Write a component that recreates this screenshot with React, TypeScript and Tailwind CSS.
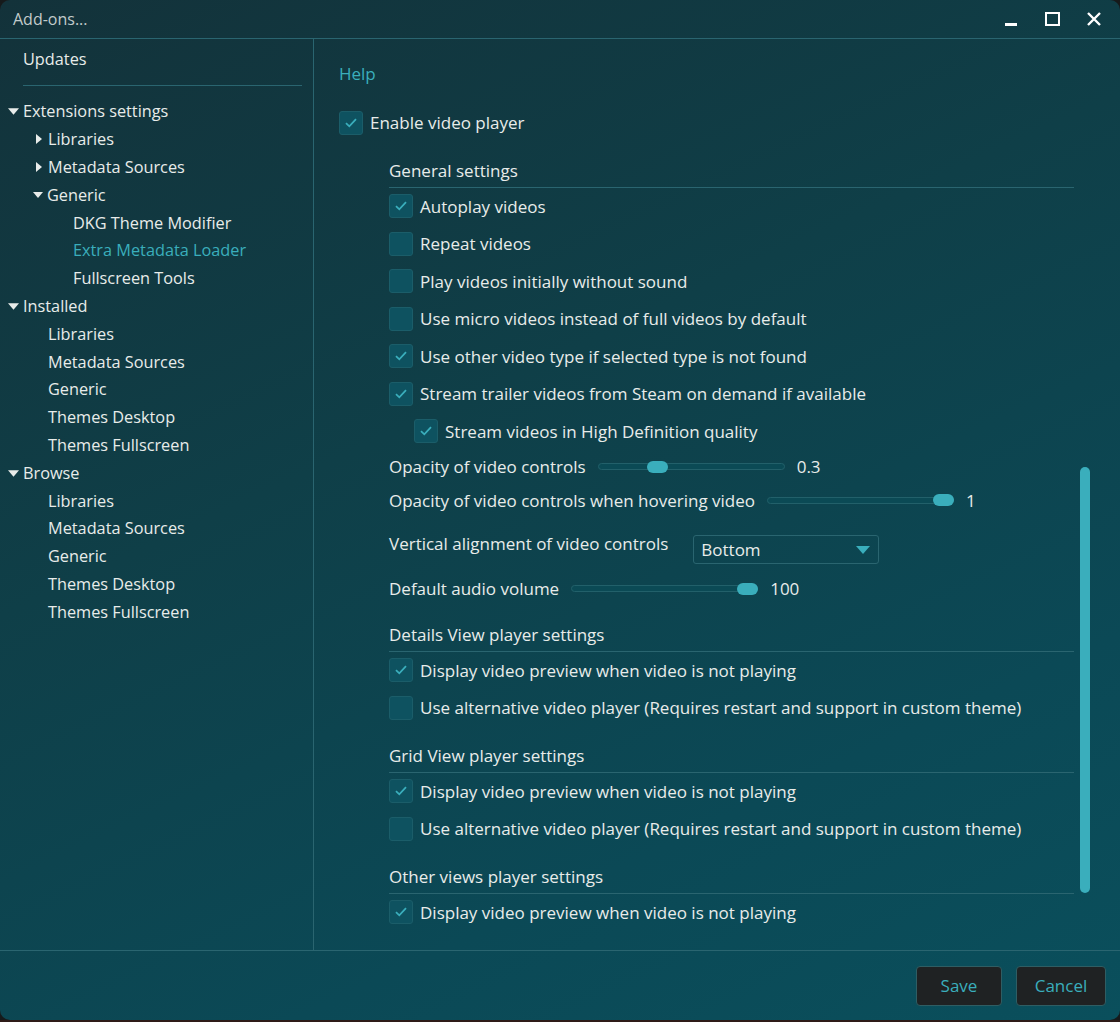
import React from "react";

const FONT = { fontFamily: "'Open Sans', Lato, sans-serif" };

type TreeRow = {
  label: string;
  kind: "down0" | "right1" | "down1" | "plain1" | "plain2";
  active?: boolean;
};

const TREE: TreeRow[] = [
  { label: "Extensions settings", kind: "down0" },
  { label: "Libraries", kind: "right1" },
  { label: "Metadata Sources", kind: "right1" },
  { label: "Generic", kind: "down1" },
  { label: "DKG Theme Modifier", kind: "plain2" },
  { label: "Extra Metadata Loader", kind: "plain2", active: true },
  { label: "Fullscreen Tools", kind: "plain2" },
  { label: "Installed", kind: "down0" },
  { label: "Libraries", kind: "plain1" },
  { label: "Metadata Sources", kind: "plain1" },
  { label: "Generic", kind: "plain1" },
  { label: "Themes Desktop", kind: "plain1" },
  { label: "Themes Fullscreen", kind: "plain1" },
  { label: "Browse", kind: "down0" },
  { label: "Libraries", kind: "plain1" },
  { label: "Metadata Sources", kind: "plain1" },
  { label: "Generic", kind: "plain1" },
  { label: "Themes Desktop", kind: "plain1" },
  { label: "Themes Fullscreen", kind: "plain1" },
];

function DownArrow({ className }: { className: string }) {
  return (
    <svg className={className} viewBox="0 0 10 6" fill="#e8ecea">
      <path d="M0 0 L10 0 L5 6 Z" />
    </svg>
  );
}

function RightArrow({ className }: { className: string }) {
  return (
    <svg className={className} viewBox="0 0 6 10" fill="#e8ecea">
      <path d="M0 0 L6 5 L0 10 Z" />
    </svg>
  );
}

function TreeItem({ row }: { row: TreeRow }) {
  const color = row.active ? "text-[#3aaebc]" : "text-[#e8ecea]";
  if (row.kind === "down0") {
    return (
      <div className="flex h-[27.8px] items-center pl-[8px]">
        <DownArrow className="mr-[4px] h-[7px] w-[11px]" />
        <span className={color}>{row.label}</span>
      </div>
    );
  }
  if (row.kind === "right1") {
    return (
      <div className="flex h-[27.8px] items-center pl-[36px]">
        <RightArrow className="mr-[6px] h-[10px] w-[6px]" />
        <span className={color}>{row.label}</span>
      </div>
    );
  }
  if (row.kind === "down1") {
    return (
      <div className="flex h-[27.8px] items-center pl-[33px]">
        <DownArrow className="mr-[4px] h-[6px] w-[10px]" />
        <span className={color}>{row.label}</span>
      </div>
    );
  }
  if (row.kind === "plain1") {
    return (
      <div className="flex h-[27.8px] items-center pl-[48px]">
        <span className={color}>{row.label}</span>
      </div>
    );
  }
  return (
    <div className="flex h-[27.8px] items-center pl-[73px]">
      <span className={color}>{row.label}</span>
    </div>
  );
}

function CheckBox({ checked }: { checked: boolean }) {
  return (
    <div className="flex h-[24px] w-[24px] shrink-0 items-center justify-center rounded-[3px] border border-[#1b5d69] bg-[#0e5260]">
      {checked && (
        <svg viewBox="0 0 12 10" className="h-[10px] w-[12px]" fill="none">
          <path d="M1 5.2 L4.3 8.3 L11 1.2" stroke="#3aaebc" strokeWidth="1.8" />
        </svg>
      )}
    </div>
  );
}

function CheckRow({ label, checked, indent }: { label: string; checked: boolean; indent?: boolean }) {
  return (
    <div className={indent ? "flex h-[37.5px] items-center gap-[7px] pl-[25px]" : "flex h-[37.5px] items-center gap-[7px]"}>
      <CheckBox checked={checked} />
      <span className="text-[#e8ecea]">{label}</span>
    </div>
  );
}

function SectionHeader({ title }: { title: string }) {
  return (
    <div className="flex h-[46px] items-end border-b border-[#2a6570] pb-[6px]">
      <span className="leading-[20px] text-[#e8ecea]">{title}</span>
    </div>
  );
}

function Slider({ value }: { value: number }) {
  return (
    <div className="relative flex h-[14px] w-[187px] items-center">
      <div className="h-[7px] w-full rounded-full border border-[#22606a] bg-[#0b4a55]" />
      <div
        className="absolute top-[1px] h-[12px] w-[21px] rounded-full bg-[#3aaebc]"
        style={{ left: `${value * 166}px` }}
      />
    </div>
  );
}

function SliderRow({ label, value, text }: { label: string; value: number; text: string }) {
  return (
    <div className="flex h-[33.5px] items-center">
      <span className="text-[#e8ecea]">{label}</span>
      <div className="ml-[12px]">
        <Slider value={value} />
      </div>
      <span className="ml-[12px] text-[#e8ecea]">{text}</span>
    </div>
  );
}

export default function App() {
  return (
    <div className="h-[1022px] w-[1120px] bg-[#161a1b]" style={FONT}>
      <div className="flex h-[1020px] w-[1120px] flex-col overflow-hidden rounded-[10px] bg-[linear-gradient(155deg,#13323a_0%,#0f3f48_40%,#0b4956_75%,#0a4f5c_100%)] text-[16px]">
        {/* title bar */}
        <div className="flex h-[39px] shrink-0 items-center border-b border-[#2a6570]">
          <span className="ml-[13px] text-[16px] text-[#c2cbcb]">Add-ons...</span>
          <div className="ml-auto flex items-center">
            <div className="mt-[10px] h-[3px] w-[12px] bg-white" />
            <div className="ml-[28px] h-[14px] w-[15px] border-2 border-white" />
            <svg viewBox="0 0 14 14" className="ml-[27px] mr-[19px] h-[14px] w-[14px]">
              <path d="M1 1 L13 13 M13 1 L1 13" stroke="white" strokeWidth="2.4" />
            </svg>
          </div>
        </div>

        {/* main */}
        <div className="flex h-[912px] shrink-0 border-b border-[#2a6570]">
          <aside className="w-[314px] shrink-0 border-r border-[#2a6570] pt-[6px] text-[16.3px]">
            <div className="flex h-[27.8px] items-center pl-[23px] text-[#e8ecea]">Updates</div>
            <div className="ml-[23px] mr-[11px] mt-[12px] border-b border-[#2a6570]" />
            <div className="mt-[12px]">
              {TREE.map((row, i) => (
                <TreeItem key={i} row={row} />
              ))}
            </div>
          </aside>

          <section className="flex min-w-0 flex-1 overflow-hidden text-[17px]">
            <div className="min-w-0 flex-1 pl-[25px] pt-[25px]">
              <div className="leading-[20px] text-[#3aaebc]">Help</div>
              <div className="mt-[20px]">
                <CheckRow label="Enable video player" checked />
              </div>

              <div className="pl-[50px]">
                <SectionHeader title="General settings" />
                <CheckRow label="Autoplay videos" checked />
                <CheckRow label="Repeat videos" checked={false} />
                <CheckRow label="Play videos initially without sound" checked={false} />
                <CheckRow label="Use micro videos instead of full videos by default" checked={false} />
                <CheckRow label="Use other video type if selected type is not found" checked />
                <CheckRow label="Stream trailer videos from Steam on demand if available" checked />
                <CheckRow label="Stream videos in High Definition quality" checked indent />
                <SliderRow label="Opacity of video controls" value={0.3} text="0.3" />
                <SliderRow label="Opacity of video controls when hovering video" value={1} text="1" />

                <div className="mt-[18px] flex items-start">
                  <span className="mt-[-1px] leading-[20px] text-[#e8ecea]">
                    Vertical alignment of video controls
                  </span>
                  <div className="ml-[25px] flex h-[29px] w-[186px] items-center justify-between rounded-[3px] border border-[#2a6570] pl-[7px] pr-[8px]">
                    <span className="text-[#e8ecea]">Bottom</span>
                    <svg viewBox="0 0 14 8" className="h-[8px] w-[14px]">
                      <path d="M0 0 L14 0 L7 8 Z" fill="#3aaebc" />
                    </svg>
                  </div>
                </div>
                <div className="mt-[8px]">
                  <SliderRow label="Default audio volume" value={1} text="100" />
                </div>

                <SectionHeader title="Details View player settings" />
                <CheckRow label="Display video preview when video is not playing" checked />
                <CheckRow
                  label="Use alternative video player (Requires restart and support in custom theme)"
                  checked={false}
                />

                <SectionHeader title="Grid View player settings" />
                <CheckRow label="Display video preview when video is not playing" checked />
                <CheckRow
                  label="Use alternative video player (Requires restart and support in custom theme)"
                  checked={false}
                />

                <SectionHeader title="Other views player settings" />
                <CheckRow label="Display video preview when video is not playing" checked />
              </div>
            </div>

            <div className="ml-[6px] mr-[30px] w-[10px] shrink-0 pt-[428px]">
              <div className="h-[426px] w-[10px] rounded-full bg-[#3aaebc]" />
            </div>
          </section>
        </div>

        {/* footer */}
        <div className="flex flex-1 items-start justify-end gap-[14px] pr-[14px] pt-[15px] text-[17px]">
          <button className="h-[40px] w-[86px] rounded-[4px] border border-[#2f5d63] bg-[#1f2223] text-[#3aaebc]">
            Save
          </button>
          <button className="h-[40px] w-[90px] rounded-[4px] border border-[#2f5d63] bg-[#1f2223] text-[#3aaebc]">
            Cancel
          </button>
        </div>
      </div>
      <div className="h-[2px] w-full bg-[#2e1b18]" />
    </div>
  );
}
